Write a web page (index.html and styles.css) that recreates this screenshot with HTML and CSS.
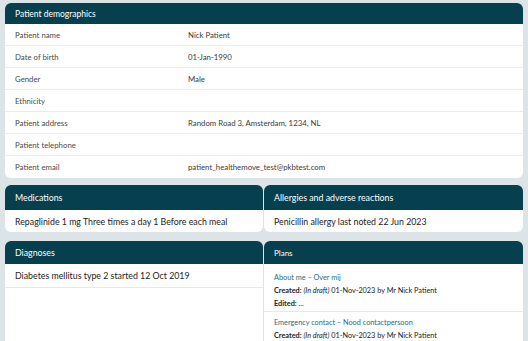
FILE: index.html
```html
<!DOCTYPE html>
<html>
<head>
<meta charset="utf-8">
<link rel="stylesheet" href="styles.css">
</head>
<body>
<div class="page">
  <section class="card demo">
    <div class="head small">Patient demographics</div>
    <div class="row"><span class="lbl">Patient name</span><span class="val">Nick Patient</span></div>
    <div class="row"><span class="lbl">Date of birth</span><span class="val">01-Jan-1990</span></div>
    <div class="row"><span class="lbl">Gender</span><span class="val">Male</span></div>
    <div class="row"><span class="lbl">Ethnicity</span><span class="val"></span></div>
    <div class="row"><span class="lbl">Patient address</span><span class="val">Random Road 3, Amsterdam, 1234, NL</span></div>
    <div class="row"><span class="lbl">Patient telephone</span><span class="val"></span></div>
    <div class="row last"><span class="lbl">Patient email</span><span class="val">patient_healthemove_test@pkbtest.com</span></div>
  </section>

  <div class="pair pair1">
    <section class="card">
      <div class="head big h25">Medications</div>
      <div class="item">Repaglinide 1 mg Three times a day 1 Before each meal</div>
    </section>
    <section class="card">
      <div class="head big h25">Allergies and adverse reactions</div>
      <div class="item">Penicillin allergy last noted 22 Jun 2023</div>
    </section>
  </div>

  <div class="pair pair2">
    <section class="card open">
      <div class="head big h23">Diagnoses</div>
      <div class="item diag">Diabetes mellitus type 2 started 12 Oct 2019</div>
    </section>
    <section class="card open">
      <div class="head plans h23">Plans</div>
      <div class="plan first">
        <a class="plink">About me – Over mij</a>
        <div class="pline"><b>Created:</b> <i>(In draft)</i> 01-Nov-2023 by Mr Nick Patient</div>
        <div class="pline"><b>Edited:</b> ...</div>
      </div>
      <div class="plan second">
        <a class="plink">Emergency contact – Nood contactpersoon</a>
        <div class="pline"><b>Created:</b> <i>(In draft)</i> 01-Nov-2023 by Mr Nick Patient</div>
      </div>
    </section>
  </div>
</div>
</body>
</html>
```

FILE: styles.css
```css
* { box-sizing: border-box; }
html, body { margin: 0; padding: 0; }
body {
  background: #dde4e8;
  font-family: Lato, "Open Sans", sans-serif;
  color: #2b2b2b;
  height: 341px;
  overflow: hidden;
}
.page {
  padding: 3px 5px 0 5px;
  display: flex;
  flex-direction: column;
}
.card {
  background: #fff;
  border-radius: 6px;
  overflow: hidden;
}
.head {
  background: #063f4e;
  color: #fff;
  display: flex;
  align-items: center;
  padding-left: 10px;
}
.head.small { font-size: 8.5px; height: 21px; }
.head.big { font-size: 8.8px; }
.head.plans { font-size: 8px; }
.head.h25 { height: 25px; }
.head.h23 { height: 23px; }
.row {
  display: grid;
  grid-template-columns: 173px 1fr;
  height: 22px;
  align-items: center;
  padding-left: 10px;
  font-size: 7.8px;
  border-bottom: 1px solid #e9edef;
}
.row.last { border-bottom: none; }
.lbl { color: #4a4a4a; }
.val { color: #3a3a3a; }
.pair {
  display: grid;
  grid-template-columns: 258px 259px;
  gap: 1px;
}
.pair1 { margin-top: 7px; }
.pair2 { margin-top: 9px; height: 120px; }
.card.open { border-radius: 6px 6px 0 0; }
.item {
  font-size: 8.8px;
  padding-left: 10px;
  height: 22px;
  display: flex;
  align-items: center;
  color: #222;
}
.item.diag {
  height: 24px;
  border-bottom: 1px solid #e6eaec;
}
.plan {
  padding: 6px 10px 1px 10px;
  border-bottom: 1px solid #e6eaec;
  font-size: 7.3px;
  line-height: 13px;
}
.plan.first { padding-top: 7px; }
.plan.second { padding-top: 4px; }
.plink { color: #2c6b7d; display: block; }
.pline { color: #222; }
.pline b { font-weight: 700; }
.pline i { font-style: italic; }
```
